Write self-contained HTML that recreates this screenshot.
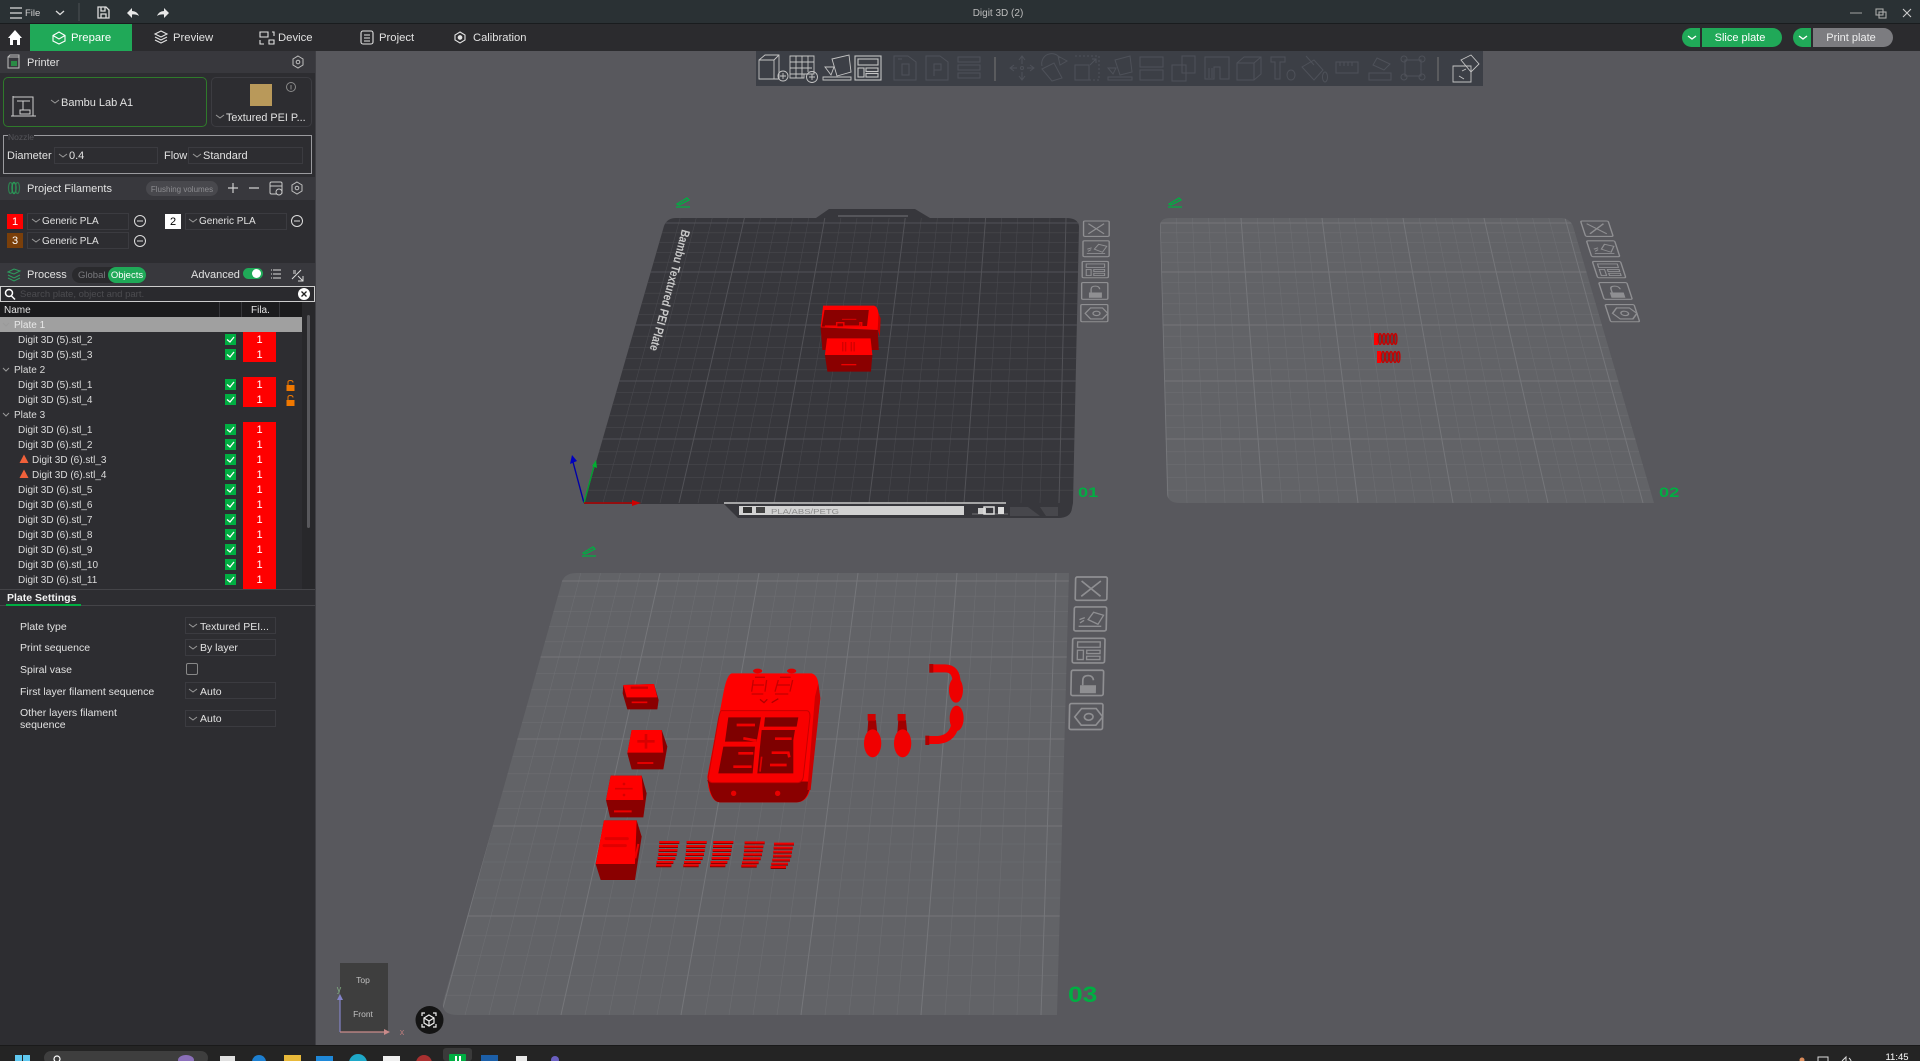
<!DOCTYPE html>
<html><head><meta charset="utf-8"><title>Digit 3D (2)</title>
<style>
html,body{margin:0;padding:0;width:1920px;height:1061px;overflow:hidden;background:#58585d}
body{position:relative;font-family:"Liberation Sans",sans-serif}
.b{position:absolute}
.t{position:absolute;white-space:nowrap;color:#e2e2e2;font-size:11px;line-height:14px;height:14px}
.hd{position:absolute;left:0;width:315px;background:#38383d}
.c{position:absolute;border:1px solid #3b3b40;box-sizing:border-box;height:17px}
.n{position:absolute;left:18px;white-space:nowrap;color:#dcdcdc;font-size:10px;line-height:14px}
.k{position:absolute;left:225px;width:11px;height:11px;background:#00ae42}
.f{position:absolute;left:243px;width:33px;text-align:center;color:#fff;font-size:11px;line-height:15px}
svg.a{position:absolute;left:0;top:0}
</style></head><body>

<!-- viewport -->
<svg class="a" width="1920" height="1061" viewBox="0 0 1920 1061" style="z-index:1">
<defs>
<clipPath id="c1"><path d="M664,226Q667,218 676,218L1066,218Q1078,218 1079,226L1073,503L584,503Z"/></clipPath>
<clipPath id="c2"><path d="M1160,226Q1160,218 1170,218L1562,218Q1570,219 1573,226L1654,503L1180,503Q1168,503 1167,494Z"/></clipPath>
<clipPath id="c3"><path d="M561,585Q563,573 576,573L1069,573L1057,1015L458,1015Q441,1015 443,1002Z"/></clipPath>
<g id="stack" fill="none" stroke="#8f8f92" stroke-width="5">
<rect x="2" y="0" width="95" height="70" rx="5"/><path d="M20,12L78,58M78,12L20,58"/>
<rect x="0" y="90" width="97" height="72" rx="5"/><path d="M42,128L58,106L88,115L72,142ZM14,148H82M16,128L32,122M18,138L30,130" stroke-width="4"/>
<rect x="-3" y="184" width="97" height="74" rx="5"/><path d="M12,195H80V211H12ZM12,220H30V248H12ZM40,220H80V230H40ZM40,238H80V248H40Z" stroke-width="4"/>
<rect x="-5" y="280" width="97" height="76" rx="5"/><rect x="22" y="325" width="48" height="24" fill="#8f8f92" stroke="none"/><path d="M30,325V310Q30,296 46,296Q60,296 62,310"/>
<rect x="-8" y="380" width="100" height="78" rx="5"/><path d="M8,420L28,395H72L92,420L72,445H28Z"/><ellipse cx="50" cy="420" rx="13" ry="10"/>
</g>
<g id="pen" fill="none" stroke="#00ae42" stroke-width="1.3"><path d="M-6,2L4,-4L6,-2L-4,3ZM-7,5H7"/></g>
<g id="st"><path d="M10,5H70M9,17H66M8,29H64M7,41H62M5,53H58M2,65H52M0,75H46" stroke="#850000" stroke-width="8" fill="none"/>
<path d="M10,3H70M9,15H66M8,27H64M7,39H62M5,51H58M2,63H52M0,73H46" stroke="#f00000" stroke-width="6" fill="none"/></g>
<g id="spr"><rect x="0" y="0" width="4" height="12" fill="#ff0000"/><g fill="#4a0000" fill-opacity=".35" stroke="#c80000" stroke-width="1.2"><ellipse cx="6" cy="6" rx="1.8" ry="5.5"/><ellipse cx="10" cy="6" rx="1.8" ry="5.5"/><ellipse cx="14" cy="6" rx="1.8" ry="5.5"/><ellipse cx="18" cy="6" rx="1.8" ry="5.5"/><ellipse cx="21.5" cy="6" rx="1.5" ry="5.5"/></g></g>
</defs>

<!-- Plate 1 -->
<path d="M664,226Q667,218 676,218L816,218L829,209L915,209L930,218L1066,218Q1078,218 1079,226L1073,503L1072,508Q1071,518 1058,518L738,518L724,504L584,504Z" fill="#37373c"/>
<g id="g1" clip-path="url(#c1)"></g>
<rect x="838" y="215" width="70" height="2" fill="#55555a"/>
<path d="M724,503H1006" stroke="#c8c8c8" stroke-width="1.5"/>
<rect x="739" y="506" width="225" height="9" fill="#d2d2d2"/>
<rect x="743" y="507" width="9" height="6" fill="#333"/><rect x="756" y="507" width="9" height="6" fill="#444"/>
<text x="771" y="514" font-size="7" fill="#8a8a8a" textLength="68" lengthAdjust="spacingAndGlyphs">PLA/ABS/PETG</text>
<path d="M972,514L1008,514" stroke="#aaa" stroke-width=".6"/>
<rect x="978" y="508" width="8" height="6" fill="#ccc"/><rect x="984" y="507" width="10" height="7" fill="none" stroke="#ddd" stroke-width="1.5"/><rect x="998" y="507" width="6" height="7" fill="#ddd"/>
<path d="M1010,507H1028L1040,516H1010ZM1040,507H1058V516H1046Z" fill="#47474c"/>
<text transform="translate(682,229) rotate(105) scale(1,.95)" font-size="13" font-weight="700" fill="#c8c8c8" textLength="125" lengthAdjust="spacingAndGlyphs">Bambu Textured PEI Plate</text>
<use href="#pen" x="683" y="202"/>
<use href="#stack" transform="matrix(.27,0,0,.22,1083,221)"/>
<text transform="translate(1078,497) scale(1.3,1)" font-size="14" font-weight="700" fill="#00ae42">01</text>
<g transform="translate(560,190) scale(.357,.3333)">
<path d="M885,350L898,385L896,440L890,420Z" fill="#c80000"/>
<path d="M730,412L890,420L893,480L735,480Z" fill="#8e0000"/>
<path d="M737,347H880Q890,350 892,370L890,420L730,412Z" fill="#ff0000"/>
<path d="M741,360H865L860,408L733,410Z" fill="#8a0000"/>
<path d="M742,408L775,408V398L795,398V408H840V398H845V408" stroke="#ee0000" stroke-width="4" fill="none"/><path d="M790,388H830" stroke="#e00000" stroke-width="3"/>
<path d="M748,445H870L875,495H742Z" fill="#ff0000"/>
<path d="M792,456V484M800,456V484M816,456V484M824,456V484" stroke="#d40000" stroke-width="4"/>
<path d="M742,495H875L871,545H749Z" fill="#8a0000"/><path d="M788,524H830" stroke="#ee0000" stroke-width="4"/>
</g>
<path d="M584,503L573,462" stroke="#0000a8" stroke-width="1.4"/><path d="M570,464L572,455L577,461Z" fill="#0000c0"/>
<path d="M584,503L594,466" stroke="#00a030" stroke-width="1.4"/><path d="M592,466L596,460L597,468Z" fill="#00b030"/>
<path d="M584,503H636" stroke="#b00000" stroke-width="1.6"/><path d="M632,500L641,503L632,506Z" fill="#d00000"/>

<!-- Plate 2 -->
<path d="M1160,226Q1160,218 1170,218L1562,218Q1570,219 1573,226L1654,503L1180,503Q1168,503 1167,494Z" fill="#626367"/>
<g id="g2" clip-path="url(#c2)"></g>
<use href="#pen" x="1175" y="202"/>
<use href="#stack" transform="matrix(.29,0,.072,.22,1580,221)"/>
<text transform="translate(1659,497) scale(1.3,1)" font-size="14" font-weight="700" fill="#00ae42">02</text>
<use href="#spr" x="1374" y="333"/><use href="#spr" x="1377" y="351"/>

<!-- Plate 3 -->
<path d="M561,585Q563,573 576,573L1069,573L1057,1015L458,1015Q441,1015 443,1002Z" fill="#626367"/>
<g id="g3" clip-path="url(#c3)"></g>
<use href="#pen" x="589" y="551"/>
<use href="#stack" transform="matrix(.333,0,-.007,.333,1075,577)"/>
<text transform="translate(1068,1002) scale(1.2,1)" font-size="22" font-weight="700" fill="#00ae42">03</text>
<g transform="translate(580,640) scale(.3333)">
<!-- body -->
<ellipse cx="533" cy="93" rx="14" ry="7" fill="#e00000"/><ellipse cx="635" cy="93" rx="14" ry="7" fill="#e00000"/>
<path d="M455,100L695,100Q712,105 715,130L721,175L690,450Q680,487 650,487L420,487Q395,487 385,440L382,410L430,160Q440,105 455,100Z" fill="#ff0000"/>
<path d="M382,420L386,432Q395,487 420,487L650,487Q680,487 690,440L695,425Z" fill="#8a0000"/>
<path d="M715,130L721,175L692,450L682,450L705,170Z" fill="#cc0000"/>
<path d="M425,212Q420,212 415,240L385,410Q383,428 400,428L650,428Q668,428 670,410L690,230Q690,212 680,212Z" fill="#f80000" stroke="#c80000" stroke-width="3"/>
<path d="M445,232H543L530,305H435Z M555,232H655L650,260H552Z M545,270H645L640,300L640,400H532Z M430,320H525L518,400H415Z" fill="#7e0000"/>
<path d="M470,255H525M490,295L530,302M475,340H520M460,380H515M585,296H635M575,338H625L628,352M570,375H620" stroke="#f00000" stroke-width="8" fill="none"/>
<path d="M545,350L540,395" stroke="#e00000" stroke-width="5"/>
<path d="M525,112H555M520,120L515,155M560,120L555,155M520,135H552M515,162H550M600,112H632M595,120L585,155M638,120L630,155M592,135H630M585,162H625" stroke="#c40000" stroke-width="4" fill="none"/>
<path d="M540,178L552,188L562,178M575,188L585,182L595,176" stroke="#b00000" stroke-width="4" fill="none"/>
<circle cx="461" cy="460" r="8" fill="#e80000"/><circle cx="593" cy="460" r="8" fill="#e80000"/>
<!-- box a -->
<path d="M130,135L222,132L236,180L232,208H142L128,160Z" fill="#8a0000"/><path d="M130,135L222,132L232,172L140,172Z" fill="#ff0000"/><path d="M152,143H204" stroke="#c80000" stroke-width="7"/><path d="M155,187H202" stroke="#ee0000" stroke-width="5"/>
<!-- box b -->
<path d="M155,270H245L262,320L250,388H155L142,340Z" fill="#8a0000"/><path d="M155,270H245L250,338H142Z" fill="#ff0000"/><path d="M172,304H224M198,282V326" stroke="#d80000" stroke-width="8"/><path d="M172,369H220" stroke="#ee0000" stroke-width="5"/>
<!-- box c -->
<path d="M92,407H185L200,460L190,532H90L78,480Z" fill="#8a0000"/><path d="M92,407H185L190,480H78Z" fill="#ff0000"/><path d="M105,446H158" stroke="#d80000" stroke-width="5"/><circle cx="132" cy="432" r="4" fill="#d80000"/><circle cx="132" cy="465" r="4" fill="#d80000"/><path d="M102,514H155" stroke="#ee0000" stroke-width="6"/>
<!-- box d -->
<path d="M72,541H170L185,590L165,720H62L47,672Z" fill="#8a0000"/><path d="M72,541H170L165,672H47Z" fill="#ff0000"/><path d="M78,596H142M72,617H136" stroke="#e00000" stroke-width="9" stroke-linecap="round"/><path d="M175,612L166,655" stroke="#ee0000" stroke-width="6"/>
<!-- stacks -->
<use href="#st" x="228" y="603"/><use href="#st" x="310" y="603"/><use href="#st" x="390" y="603"/><use href="#st" x="484" y="604"/><use href="#st" x="572" y="608"/>
<!-- knobs -->
<path d="M865,240H888L892,280H862Z" fill="#a00000"/><rect x="863" y="222" width="24" height="20" fill="#d00000"/><ellipse cx="878" cy="310" rx="26" ry="42" fill="#f00000"/>
<path d="M955,240H978L982,280H952Z" fill="#a00000"/><rect x="953" y="222" width="24" height="20" fill="#d00000"/><ellipse cx="968" cy="310" rx="26" ry="42" fill="#f00000"/>
<!-- hooks -->
<path d="M1050,85H1095Q1130,85 1130,130" stroke="#f00000" stroke-width="24" fill="none"/><ellipse cx="1128" cy="150" rx="21" ry="38" fill="#ee0000"/>
<path d="M1037,300H1075Q1122,295 1127,245" stroke="#f00000" stroke-width="24" fill="none"/><ellipse cx="1130" cy="235" rx="21" ry="38" fill="#ee0000"/>
<rect x="1048" y="72" width="12" height="26" fill="#b00000"/><rect x="1036" y="287" width="12" height="28" fill="#b00000"/>
</g>

<!-- toolbar -->
<rect x="756" y="51" width="727" height="35" fill="#3c3f46"/>
<g fill="none" stroke="#c4c4c4" stroke-width=".9">
<g transform="translate(773,68)"><path d="M-14,-8L-8,-13H6V11H-14ZM-14,-8H1V11M1,-8L6,-13"/><circle cx="10" cy="8" r="5"/><path d="M10,5V11M7,8H13"/></g>
<g transform="translate(804,68)"><path d="M-14,-12H10V6H0V10H-14ZM-14,-6H10M-14,0H8M-14,6H0M-8,-12V10M-2,-12V10M4,-12V4"/><circle cx="8" cy="9" r="5.5"/><path d="M8,6V12M5,9H11"/></g>
<g transform="translate(837,68)"><path d="M-5,-9L12,-13L14,4L0,8ZM-14,12H14V9H-14ZM-12,-1L-6,7L-3,-1Z"/></g>
<g transform="translate(868,68)" stroke-width="1.1"><rect x="-13" y="-12" width="26" height="24"/><rect x="-10" y="-9" width="20" height="6"/><rect x="-10" y="0" width="6" height="9"/><rect x="-2" y="0" width="12" height="3.5"/><rect x="-2" y="5.5" width="12" height="3.5"/></g>
<g transform="translate(1465,68)"><path d="M-12,-2H6V14H-12ZM-4,-8L6,-13L14,-4L6,4Z"/><path d="M-3,3L1,1M-6,8L-1,11"/></g>
</g>
<g fill="none" stroke="#4e5159" stroke-width="1">
<g transform="translate(905,68)"><path d="M-11,-12H3L11,-6V12H-11ZM-7,-9H-3M-3,-4H4V7H-3Z"/></g>
<g transform="translate(937,68)"><path d="M-11,-12H3L11,-6V12H-11ZM-3,-4H4V2H-3ZM-3,2V8"/></g>
<g transform="translate(969,68)"><path d="M-11,-11H11V-6H-11ZM-11,-3H11V2H-11ZM-11,5H11V10H-11Z"/></g>
<g transform="translate(1022,68)"><path d="M0,-11V-4M0,11V4M-12,0H-5M12,0H5M-3,-8L0,-12L3,-8M-3,8L0,12L3,8M-8,-3L-12,0L-8,3M8,-3L12,0L8,3"/><circle r="1.5"/></g>
<g transform="translate(1054,68)"><path d="M-12,1L0,-5L8,10L-2,13ZM-12,-2A10,10 0 0 1 6,-10M4,-12L13,-7L6,-3Z"/></g>
<g transform="translate(1087,68)"><rect x="-12" y="-3" width="14" height="15"/><path stroke-dasharray="2 2" d="M-12,-12H12V12H2"/><path d="M3,-3L9,-9M5,-9H9V-5"/></g>
<g transform="translate(1120,68)"><path d="M-5,-8L10,-12L12,4L0,7ZM-12,12H12V9H-12ZM-12,0L-7,6L-4,0Z"/></g>
<g transform="translate(1152,68)"><rect x="-12" y="-11" width="23" height="10"/><rect x="-12" y="2" width="23" height="10"/></g>
<g transform="translate(1184,68)"><rect x="-2" y="-12" width="13" height="17"/><rect x="-12" y="-3" width="14" height="16"/></g>
<g transform="translate(1217,68)"><path d="M-12,-11H12V11H3V-1H-3V11H-12ZM-8,0V10M-5,0V10"/></g>
<g transform="translate(1249,68)"><path d="M-12,-5L-5,-11H12V6L5,12H-12ZM-12,-5H5V12M5,-5L12,-11"/></g>
<g transform="translate(1284,68)"><path d="M-13,-11H1V-6H-4V11H-9V-6H-13Z"/><ellipse cx="7" cy="7" rx="4" ry="5"/></g>
<g transform="translate(1314,68)"><path d="M-12,-1L0,-8L9,2L0,12ZM-8,-12L0,-3"/><ellipse cx="11" cy="9" rx="2.5" ry="5"/></g>
<g transform="translate(1347,68)"><rect x="-11" y="-6" width="22" height="11"/><path d="M-7,-6V-2M-3,-6V-2M1,-6V-2M5,-6V-2"/></g>
<g transform="translate(1380,68)"><path d="M-3,-10L10,-4L4,2L-7,-3ZM-11,5H11V12H-11Z"/></g>
<g transform="translate(1413,68)"><rect x="-8" y="-8" width="16" height="16"/><circle cx="-9" cy="-9" r="3"/><circle cx="9" cy="-9" r="3"/><circle cx="-9" cy="9" r="3"/><circle cx="9" cy="9" r="3"/></g>
</g>
<path d="M995,57V81M1438,57V81" stroke="#777" stroke-width="1"/>

<!-- nav cube -->
<rect x="340" y="963" width="48" height="69" fill="#3e3e3e"/>
<text x="363" y="983" text-anchor="middle" font-size="8.5" fill="#c0c0c0">Top</text>
<text x="363" y="1017" text-anchor="middle" font-size="8.5" fill="#c0c0c0">Front</text>
<path d="M340,1032V998" stroke="#8383c8" stroke-width="1.2"/><path d="M337,1000L340,994L343,1000Z" fill="#8383c8"/>
<path d="M340,1032H386" stroke="#c98a8a" stroke-width="1.2"/><path d="M384,1029L390,1032L384,1035Z" fill="#c98a8a"/>
<text x="339" y="992" text-anchor="middle" font-size="9" fill="#7fa87f">y</text>
<text x="402" y="1035" text-anchor="middle" font-size="9" fill="#b87b7b">x</text>
<ellipse cx="429.5" cy="1020" rx="14" ry="14" fill="#141414"/>
<g fill="none" stroke="#eee" stroke-width="1.2"><path d="M422,1016V1013H425M433,1013H436V1016M436,1024V1027H433M425,1027H422V1024"/><path d="M429,1015L434,1018V1023L429,1026L424,1023V1018ZM424,1018L429,1021L434,1018M429,1021V1026"/></g>
</svg>

<!-- left panel -->
<div class="b" style="left:0;top:51px;width:315px;height:995px;background:#2d2d31;z-index:2"></div>
<div class="b" style="left:315px;top:51px;width:1px;height:995px;background:#3f3f44;z-index:2"></div>

<!-- title bar -->
<div class="b" style="left:0;top:0;width:1920px;height:23px;background:#2a3134;z-index:3;border-bottom:1px solid #191c1e"></div>
<div class="b" style="left:0;top:24px;width:1920px;height:27px;background:#2b2b2e;z-index:3"></div>
<div class="b" style="left:30px;top:24px;width:102px;height:27px;background:#20a958;z-index:4"></div>
<div class="b" style="left:1702px;top:28px;width:80px;height:19px;background:#20a958;border-radius:0 10px 10px 0;z-index:4"></div>
<div class="b" style="left:1682px;top:28px;width:18px;height:19px;background:#20a958;border-radius:10px 0 0 10px;z-index:4"></div>
<div class="b" style="left:1793px;top:28px;width:18px;height:19px;background:#20a958;border-radius:10px 0 0 10px;z-index:4"></div>
<div class="b" style="left:1813px;top:28px;width:80px;height:19px;background:#7c7c80;border-radius:0 10px 10px 0;z-index:4"></div>

<!-- section headers -->
<div style="position:absolute;z-index:3;left:0;top:0">
<div class="hd" style="top:51px;height:22px"></div>
<div class="hd" style="top:177px;height:23px"></div>
<div class="hd" style="top:263px;height:23px"></div>
<div class="b" style="left:3px;top:77px;width:204px;height:50px;border:1px solid #2f7a2b;border-radius:5px;box-sizing:border-box"></div>
<div class="b" style="left:211px;top:77px;width:101px;height:50px;border:1px solid #3c3c41;border-radius:5px;box-sizing:border-box"></div>
<div class="b" style="left:250px;top:84px;width:22px;height:22px;background:#b9995a"></div>
<div class="b" style="left:3px;top:135px;width:309px;height:39px;border:1px solid #9a9a9e;box-sizing:border-box"></div>
<div class="b" style="left:8px;top:131px;width:26px;height:8px;background:#2d2d31"></div>
<div class="c" style="left:54px;top:147px;width:104px"></div>
<div class="c" style="left:188px;top:147px;width:115px"></div>
<div class="b" style="left:146px;top:181px;width:72px;height:15px;background:#48484d;border-radius:8px"></div>
<div class="b" style="left:7px;top:214px;width:16px;height:15px;background:#ff0000"></div>
<div class="b" style="left:165px;top:214px;width:16px;height:15px;background:#fff"></div>
<div class="b" style="left:7px;top:233px;width:16px;height:15px;background:#7a3f0a"></div>
<div class="c" style="left:27px;top:213px;width:102px"></div>
<div class="c" style="left:185px;top:213px;width:102px"></div>
<div class="c" style="left:27px;top:232px;width:102px"></div>
<div class="b" style="left:72px;top:267px;width:74px;height:16px;background:#2a2a2d;border-radius:8px"></div>
<div class="b" style="left:108px;top:267px;width:38px;height:16px;background:#20a958;border-radius:8px"></div>
<div class="b" style="left:243px;top:268px;width:20px;height:11px;background:#20a958;border-radius:6px"></div>
<div class="b" style="left:252px;top:269px;width:9px;height:9px;background:#fff;border-radius:50%"></div>
<div class="b" style="left:0;top:286px;width:315px;height:16px;border:1px solid #ccc;box-sizing:border-box;background:#2a2a2e"></div>
<div class="b" style="left:0;top:302px;width:302px;height:15px;background:#1b1b1d"></div>
<div class="b" style="left:219px;top:302px;width:1px;height:15px;background:#36363a"></div>
<div class="b" style="left:241px;top:302px;width:1px;height:15px;background:#36363a"></div>
<div class="b" style="left:279px;top:302px;width:1px;height:15px;background:#36363a"></div>
<div class="b" style="left:302px;top:302px;width:13px;height:287px;background:#28282b"></div>
<div class="b" style="left:307px;top:315px;width:3px;height:213px;background:#58585c;border-radius:2px"></div>
<div class="b" style="left:0;top:317px;width:302px;height:15px;background:#a0a0a0"></div>
<div class="b" style="left:243px;top:332px;width:33px;height:30px;background:#ff0000"></div>
<div class="b" style="left:243px;top:377px;width:33px;height:30px;background:#ff0000"></div>
<div class="b" style="left:243px;top:422px;width:33px;height:167px;background:#ff0000"></div>
<div class="b" style="left:0;top:589px;width:315px;height:1px;background:#444448"></div>
<div class="b" style="left:0;top:605px;width:315px;height:1px;background:#444448"></div>
<div class="b" style="left:6px;top:604px;width:75px;height:2px;background:#00ae42"></div>
<div class="c" style="left:185px;top:617px;width:91px"></div>
<div class="c" style="left:185px;top:639px;width:91px"></div>
<div class="b" style="left:186px;top:663px;width:12px;height:12px;border:1px solid #888;box-sizing:border-box;border-radius:2px"></div>
<div class="c" style="left:185px;top:682px;width:91px"></div>
<div class="c" style="left:185px;top:710px;width:91px"></div>

<div class="k" style="top:334px"></div><div class="k" style="top:349px"></div><div class="k" style="top:379px"></div><div class="k" style="top:394px"></div>
<div class="k" style="top:424px"></div><div class="k" style="top:439px"></div><div class="k" style="top:454px"></div><div class="k" style="top:469px"></div>
<div class="k" style="top:484px"></div><div class="k" style="top:499px"></div><div class="k" style="top:514px"></div><div class="k" style="top:529px"></div>
<div class="k" style="top:544px"></div><div class="k" style="top:559px"></div><div class="k" style="top:574px"></div>
</div>

<!-- text -->
<div style="position:absolute;z-index:6;left:0;top:1px">
<div class="t" style="left:25px;top:6px;font-size:9.5px;color:#cfcfcf">File</div>
<div class="t" style="left:900px;top:6px;width:196px;text-align:center;font-size:10px;color:#bdbdbd">Digit 3D (2)</div>
<div class="t" style="left:71px;top:30px;font-size:11.3px;color:#fff">Prepare</div>
<div class="t" style="left:173px;top:30px;font-size:11.3px">Preview</div>
<div class="t" style="left:278px;top:30px;font-size:11.3px">Device</div>
<div class="t" style="left:379px;top:30px;font-size:11.3px">Project</div>
<div class="t" style="left:473px;top:30px;font-size:11.2px">Calibration</div>
<div class="t" style="left:1700px;top:30px;width:80px;text-align:center;color:#fff">Slice plate</div>
<div class="t" style="left:1811px;top:30px;width:80px;text-align:center;color:#eee">Print plate</div>

<div class="t" style="left:27px;top:55px">Printer</div>
<div class="t" style="left:61px;top:95px">Bambu Lab A1</div>
<div class="t" style="left:226px;top:110px;font-size:10.8px">Textured PEI P...</div>
<div class="t" style="left:8px;top:129px;font-size:8.5px;color:#55555a">Nozzle</div>
<div class="t" style="left:7px;top:148px">Diameter</div>
<div class="t" style="left:69px;top:148px">0.4</div>
<div class="t" style="left:164px;top:148px">Flow</div>
<div class="t" style="left:203px;top:148px">Standard</div>
<div class="t" style="left:27px;top:181px">Project Filaments</div>
<div class="t" style="left:146px;top:182px;width:72px;text-align:center;font-size:8px;color:#8c8c90">Flushing volumes</div>
<div class="t" style="left:7px;top:214px;width:16px;text-align:center;color:#fff">1</div>
<div class="t" style="left:165px;top:214px;width:16px;text-align:center;color:#000">2</div>
<div class="t" style="left:7px;top:233px;width:16px;text-align:center;color:#fff">3</div>
<div class="t" style="left:42px;top:214px;font-size:10px">Generic PLA</div>
<div class="t" style="left:199px;top:214px;font-size:10px">Generic PLA</div>
<div class="t" style="left:42px;top:234px;font-size:10px">Generic PLA</div>
<div class="t" style="left:27px;top:267px">Process</div>
<div class="t" style="left:78px;top:268px;font-size:9.5px;color:#7a7a7e">Global</div>
<div class="t" style="left:108px;top:268px;width:38px;text-align:center;font-size:9.5px;color:#fff">Objects</div>
<div class="t" style="left:191px;top:267px">Advanced</div>
<div class="t" style="left:20px;top:287px;font-size:9.5px;color:#4c4c50">Search plate, object and part.</div>
<div class="t" style="left:4px;top:303px;font-size:10px">Name</div>
<div class="t" style="left:251px;top:303px;font-size:10px">Fila.</div>

<div class="n" style="left:14px;top:318px;color:#e8e8e8">Plate 1</div>
<div class="n" style="top:333px">Digit 3D (5).stl_2</div>
<div class="n" style="top:348px">Digit 3D (5).stl_3</div>
<div class="n" style="left:14px;top:363px">Plate 2</div>
<div class="n" style="top:378px">Digit 3D (5).stl_1</div>
<div class="n" style="top:393px">Digit 3D (5).stl_4</div>
<div class="n" style="left:14px;top:408px">Plate 3</div>
<div class="n" style="top:423px">Digit 3D (6).stl_1</div>
<div class="n" style="top:438px">Digit 3D (6).stl_2</div>
<div class="n" style="left:32px;top:453px">Digit 3D (6).stl_3</div>
<div class="n" style="left:32px;top:468px">Digit 3D (6).stl_4</div>
<div class="n" style="top:483px">Digit 3D (6).stl_5</div>
<div class="n" style="top:498px">Digit 3D (6).stl_6</div>
<div class="n" style="top:513px">Digit 3D (6).stl_7</div>
<div class="n" style="top:528px">Digit 3D (6).stl_8</div>
<div class="n" style="top:543px">Digit 3D (6).stl_9</div>
<div class="n" style="top:558px">Digit 3D (6).stl_10</div>
<div class="n" style="top:573px">Digit 3D (6).stl_11</div>

<div class="f" style="top:332px">1</div><div class="f" style="top:347px">1</div>
<div class="f" style="top:377px">1</div><div class="f" style="top:392px">1</div>
<div class="f" style="top:422px">1</div><div class="f" style="top:437px">1</div><div class="f" style="top:452px">1</div><div class="f" style="top:467px">1</div>
<div class="f" style="top:482px">1</div><div class="f" style="top:497px">1</div><div class="f" style="top:512px">1</div><div class="f" style="top:527px">1</div>
<div class="f" style="top:542px">1</div><div class="f" style="top:557px">1</div><div class="f" style="top:572px">1</div>

<div class="t" style="left:7px;top:590px;font-weight:700;font-size:10.5px;color:#f2f2f2">Plate Settings</div>
<div class="t" style="left:20px;top:619px;font-size:10.5px">Plate type</div>
<div class="t" style="left:20px;top:640px;font-size:10.5px">Print sequence</div>
<div class="t" style="left:20px;top:662px;font-size:10.5px">Spiral vase</div>
<div class="t" style="left:20px;top:684px;font-size:10.5px">First layer filament sequence</div>
<div class="t" style="left:20px;top:705px;font-size:10.5px">Other layers filament</div>
<div class="t" style="left:20px;top:717px;font-size:10.5px">sequence</div>
<div class="t" style="left:200px;top:619px;font-size:10.5px">Textured PEI...</div>
<div class="t" style="left:200px;top:640px;font-size:10.5px">By layer</div>
<div class="t" style="left:200px;top:684px;font-size:10.5px">Auto</div>
<div class="t" style="left:200px;top:711px;font-size:10.5px">Auto</div>
</div>

<!-- chrome icons -->
<svg class="a" width="1920" height="1061" viewBox="0 0 1920 1061" style="z-index:7">
<g fill="none" stroke="#dcdcdc" stroke-width="1.3">
<path d="M10,8H22M10,13H22M10,18H22"/>
<path d="M56,11L60,14.5L64,11"/>
<path d="M79,3V21" stroke="#454a4d"/>
<path d="M98,7H106L109,10V18H98ZM101,7V11H105V7M101,18V14H106V18"/>
</g>
<path d="M127,13L132,8V11Q137,11 139,16Q136,14 132,14.5V18Z" fill="#e8e8e8"/>
<path d="M169,13L164,8V11Q159,11 157,16Q160,14 164,14.5V18Z" fill="#e8e8e8"/>
<path d="M8,38L15,30L22,38H20V45H17V40H13V45H10V38Z" fill="#fff"/>
<g fill="none" stroke="#e4e4e4" stroke-width="1.1">
<path d="M59,32L65,35.5V41L59,44L53,41V35.5ZM53,35.5L59,39L65,35.5" stroke="#fff"/>
<path d="M161,31L167,34L161,37L155,34ZM155,37L161,40L167,37M155,40L161,43L167,40"/>
<path d="M260,32H268V37H260ZM260,40V44H264M272,32H274V36M269,40H274V44H269Z"/>
<rect x="361" y="31" width="12" height="13" rx="2"/><path d="M364,35H370M364,38H370M364,41H370"/>
<path d="M460,32L465,35V40L460,43L455,40V35Z"/><circle cx="460" cy="37.5" r="1.8" fill="#e4e4e4"/>
<path d="M1850,13H1862" stroke="#999"/>
<rect x="1876" y="9" width="7" height="6" stroke="#aaa"/><rect x="1879" y="12" width="7" height="6" stroke="#aaa"/>
<path d="M1903,9L1911,17M1911,9L1903,17" stroke="#ccc"/>
</g>
<g fill="none" stroke="#fff" stroke-width="1.4">
<path d="M1688,36L1692,39L1696,36M1799,36L1803,39L1807,36"/>
</g>
<g fill="none" stroke="#bfbfbf" stroke-width="1">
<path d="M8,57H19V68H8ZM8,57L10,55H19V57"/><rect x="11" y="61" width="6" height="5" fill="#2a8a45" stroke="none"/>
<path d="M298,56L303,59V65L298,68L293,65V59Z"/><circle cx="298" cy="62" r="1.8"/>
<path d="M297,182L302,185V191L297,194L292,191V185Z"/><circle cx="297" cy="188" r="1.8"/>
<path d="M13,96V116M13,97H33V116M11,116H36M17,101H30M23,101V110" stroke="#cfcfcf"/>
<rect x="20" y="110" width="10" height="4" stroke="#cfcfcf"/>
<circle cx="291" cy="87" r="4.5" stroke="#8a8a8a"/><path d="M291,85V89.5" stroke="#8a8a8a"/>
<path d="M51,100L55,103L59,100M216,115L220,118L224,115M59,154L63,157L67,154M193,154L197,157L201,154M32,219L36,222L40,219M189,219L193,222L197,219M32,239L36,242L40,239M189,624L193,627L197,624M189,646L193,649L197,646M189,689L193,692L197,689M189,717L193,720L197,717M3,323L6,326L9,323M3,368L6,371L9,368M3,413L6,416L9,413" stroke="#9a9a9a"/>
<path d="M228,188H238M233,183V193M249,188H259" stroke="#cfcfcf" stroke-width="1.2"/>
<rect x="270" y="182" width="12" height="12" rx="1.5" stroke="#c8c8c8"/><path d="M270,186H282" stroke="#c8c8c8"/><circle cx="279" cy="192" r="3" fill="#38383d" stroke="#c8c8c8"/>
<circle cx="140" cy="221" r="5.5" stroke="#dcdcdc"/><path d="M137,221H143" stroke="#dcdcdc"/>
<circle cx="297" cy="221" r="5.5" stroke="#dcdcdc"/><path d="M294,221H300" stroke="#dcdcdc"/>
<circle cx="140" cy="241" r="5.5" stroke="#dcdcdc"/><path d="M137,241H143" stroke="#dcdcdc"/>
<path d="M273,270H281M273,274H281M273,278H281" stroke="#dcdcdc"/><path d="M271,270H272M271,274H272M271,278H272" stroke="#dcdcdc"/>
<path d="M292,279L301,270M293,271H296M293,273H296M298,276L303,281M303,276V281H298" stroke="#dcdcdc"/>
<ellipse cx="10.5" cy="188" rx="2" ry="5.5" stroke="#2e7d4f" stroke-width="1.2"/><ellipse cx="14" cy="188" rx="2" ry="5.5" stroke="#2a9a58" stroke-width="1.4"/><ellipse cx="17.5" cy="188" rx="2" ry="5.5" stroke="#2e7d4f" stroke-width="1.2"/>
<path d="M8,272L14,269L20,271L14,274ZM8,275L14,278L20,275M8,278L14,281L20,278" stroke="#2e9d5f"/>
</g>
<circle cx="9" cy="293" r="3.5" fill="none" stroke="#fff" stroke-width="1.5"/><path d="M11.5,296L15,299.5" stroke="#fff" stroke-width="1.5"/>
<circle cx="304" cy="294" r="6" fill="#fff"/><path d="M301.5,291.5L306.5,296.5M306.5,291.5L301.5,296.5" stroke="#222" stroke-width="1.3"/>
<g fill="none" stroke="#fff" stroke-width="1.3">
<path d="M227,339.5L230,342L234,337M227,354.5L230,357L234,352M227,384.5L230,387L234,382M227,399.5L230,402L234,397M227,429.5L230,432L234,427M227,444.5L230,447L234,442M227,459.5L230,462L234,457M227,474.5L230,477L234,472M227,489.5L230,492L234,487M227,504.5L230,507L234,502M227,519.5L230,522L234,517M227,534.5L230,537L234,532M227,549.5L230,552L234,547M227,564.5L230,567L234,562M227,579.5L230,582L234,577"/>
</g>
<path d="M24,454.5L28.5,463H19.5ZM24,469.5L28.5,478H19.5Z" fill="#f0603a"/>
<g fill="#f07800"><rect x="286.5" y="385" width="8" height="6"/><rect x="286.5" y="400" width="8" height="6"/></g>
<path d="M288,385V382Q288,380.5 290.5,380.5Q293,380.5 293,382.5M288,400V397Q288,395.5 290.5,395.5Q293,395.5 293,397.5" fill="none" stroke="#f07800" stroke-width="1"/>
</svg>

<!-- taskbar -->
<div class="b" style="left:0;top:1045px;width:1920px;height:16px;background:#242424;border-top:1px solid #1a1a1a;box-sizing:border-box;z-index:8"></div>
<svg class="a" width="1920" height="1061" viewBox="0 0 1920 1061" style="z-index:9">
<rect x="44" y="1051" width="164" height="14" rx="7" fill="#3e3e3e"/>
<circle cx="57" cy="1059" r="3" fill="none" stroke="#fff" stroke-width="1.2"/>
<ellipse cx="186" cy="1060" rx="8" ry="5" fill="#8a6fb8"/>
<rect x="15" y="1055" width="7" height="6" fill="#5fc8f0"/><rect x="23" y="1055" width="7" height="6" fill="#5fc8f0"/>
<rect x="443" y="1048" width="29" height="13" rx="3" fill="#3a3a3a"/>
<rect x="220" y="1056" width="15" height="5" fill="#e0e0e0"/>
<circle cx="259" cy="1062" r="7" fill="#1d7fd0"/>
<rect x="284" y="1055" width="17" height="6" fill="#e8b93a"/>
<rect x="316" y="1056" width="17" height="5" fill="#1f88d8"/>
<circle cx="358" cy="1063" r="9" fill="#1ea8c8"/>
<rect x="383" y="1056" width="17" height="5" fill="#f0f0f0"/>
<circle cx="424" cy="1063" r="8" fill="#a83030"/>
<rect x="449" y="1054" width="17" height="7" rx="1" fill="#00ae42"/><rect x="455" y="1056" width="2" height="5" fill="#fff"/><rect x="459" y="1056" width="2" height="5" fill="#fff"/>
<rect x="481" y="1055" width="17" height="6" fill="#1c5fa8"/>
<rect x="516" y="1056" width="11" height="5" fill="#e8e8e8"/>
<circle cx="555" cy="1060" r="4" fill="#6a5fc0"/>
<circle cx="1802" cy="1060" r="2.5" fill="#d88a5a"/>
<rect x="1818" y="1057" width="10" height="5" fill="none" stroke="#ddd"/>
<path d="M1842,1061L1846,1057L1846,1061M1849,1058Q1851,1060 1851,1061" stroke="#ddd" fill="none"/>
<text x="1897" y="1060" text-anchor="middle" font-size="9.5" fill="#fff">11:45</text>
</svg>

<script>
(function(){
var NS="http://www.w3.org/2000/svg";
function plate(id,rows,xT0,dxT,xB0,dxB,yT,yB,minor,major,n0,n1){
 var g=document.getElementById(id),d1="",d2="";
 var xL=Math.min(xT0,xB0)-60,xR=Math.max(xT0+dxT*8,xB0+dxB*8);
 for(var i=0;i<rows.length-1;i++){
  for(var j=0;j<5;j++){
   var y=rows[i]+(rows[i+1]-rows[i])*j/5;
   var s="M"+xL+","+y.toFixed(1)+"H"+xR;
   if(j==0)d2+=s;else d1+=s;
  }
 }
 var ex=rows[0]-(rows[1]-rows[0])/5;
 d1+="M"+xL+","+ex.toFixed(1)+"H"+xR;
 for(var k=n0;k<=n1;k++){
  var a=k/5,t=xT0+dxT*a,b=xB0+dxB*a;
  var m="M"+t.toFixed(1)+","+yT+"L"+b.toFixed(1)+","+yB;
  if(k%5==0)d2+=m;else d1+=m;
 }
 var p=document.createElementNS(NS,"path");p.setAttribute("d",d1);p.setAttribute("stroke",minor);p.setAttribute("stroke-width",".6");p.setAttribute("fill","none");g.appendChild(p);
 var q=document.createElementNS(NS,"path");q.setAttribute("d",d2);q.setAttribute("stroke",major);q.setAttribute("stroke-width","1");q.setAttribute("fill","none");g.appendChild(q);
}
plate("g1",[223,272,325,381,439,503],664,80.4,584,95,218,503,"#48484d","#525257",0,28);
plate("g2",[223,272,325,381,439,503],1160,81,1168,95,218,503,"#6d6e72","#75767a",0,28);
plate("g3",[581,657,739,826,916,1015],561,99,441,120,573,1015,"#6d6e72","#75767a",0,28);
})();
</script>
</body></html>
